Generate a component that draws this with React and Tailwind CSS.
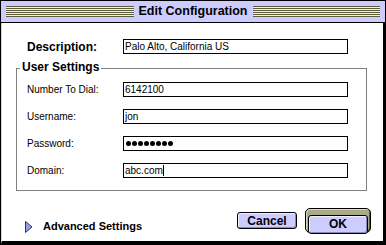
import React from 'react';

const stripes =
  'bg-[repeating-linear-gradient(to_bottom,#5c5c3a_0px,#5c5c3a_1px,#f0f0f0_1px,#f0f0f0_2px)]';

function Field({ label, children }) {
  return (
    <div className="flex items-center h-[15px]">
      <span className="w-[96px] text-[10px] text-black leading-none">{label}</span>
      <div className="w-[225px] h-[15px] border border-black bg-white flex items-center pl-[1px] text-[10px] text-black leading-none">
        {children}
      </div>
    </div>
  );
}

export default function App() {
  return (
    <div
      className="w-[386px] h-[245px] flex flex-col bg-[#ccccff] border border-black"
      style={{ fontFamily: '"Liberation Sans", Arial, sans-serif' }}
    >
      {/* Title bar */}
      <div className="h-[22px] shrink-0 flex items-center border-b border-black px-[5px] gap-[2px]">
        <div className={`flex-1 h-[11px] ${stripes}`} />
        <span className="px-[3px] text-[12.5px] font-bold text-black leading-none">Edit Configuration</span>
        <div className={`flex-1 h-[11px] ${stripes}`} />
      </div>

      {/* Body */}
      <div className="flex-1 flex flex-col bg-white border-l border-l-[#ccccff] border-r-2 border-r-black border-b-[3px] border-b-black">
        {/* Description */}
        <div className="flex items-center h-[15px] mt-[16px] pl-[25px]">
          <span className="w-[96px] text-[12px] font-bold text-black leading-none">Description:</span>
          <div className="w-[225px] h-[15px] border border-black flex items-center pl-[1px] text-[10px] text-black leading-none">
            Palo Alto, California US
          </div>
        </div>

        {/* User Settings group */}
        <div className="relative ml-[14px] mt-[14px] w-[351px] h-[123px] border border-[#808080] pl-[10px] pt-[13px] flex flex-col gap-[12px]">
          <span className="absolute -top-[8px] left-[3px] bg-white px-[2px] text-[12px] font-bold text-black leading-none">
            User Settings
          </span>
          <Field label="Number To Dial:">6142100</Field>
          <Field label="Username:">jon</Field>
          <Field label="Password:">
            <div className="flex gap-[1px] pl-[1px]">
              {Array.from({ length: 8 }).map((_, i) => (
                <span key={i} className="w-[5px] h-[5px] rounded-full bg-black" />
              ))}
            </div>
          </Field>
          <Field label="Domain:">
            abc.com<span className="w-px h-[11px] bg-black" />
          </Field>
        </div>

        {/* Bottom row */}
        <div className="flex mt-[17px] pl-[23px] pr-[12px]">
          <div className="flex items-center gap-[10px] mt-[12px] h-[13px]">
            <svg width="8" height="12" viewBox="0 0 8 12">
              <path d="M0.5 0.5 L7 6 L0.5 11.5 Z" fill="#9999ee" stroke="#333366" strokeWidth="1" />
            </svg>
            <span className="text-[11px] font-bold text-black leading-none">Advanced Settings</span>
          </div>
          <div className="ml-auto flex items-center gap-[8px]">
            <button className="w-[60px] h-[17px] rounded-[3px] border border-black bg-[#ccccff] shadow-[inset_1px_1px_0_#eeeeff,inset_-1px_-1px_0_#8888bb] text-[12px] font-bold text-black leading-none">
              Cancel
            </button>
            <div className="w-[66px] h-[25px] rounded-[5px] border border-black bg-[#aaaa88] p-[2px] shadow-[inset_1px_1px_0_#ddddbb,inset_-1px_-1px_0_#555533]">
              <button className="w-full h-full rounded-[3px] border border-black bg-[#ccccff] shadow-[inset_1px_1px_0_#eeeeff,inset_-1px_-1px_0_#8888bb] text-[12px] font-bold text-black leading-none">
                OK
              </button>
            </div>
          </div>
        </div>
      </div>
    </div>
  );
}
